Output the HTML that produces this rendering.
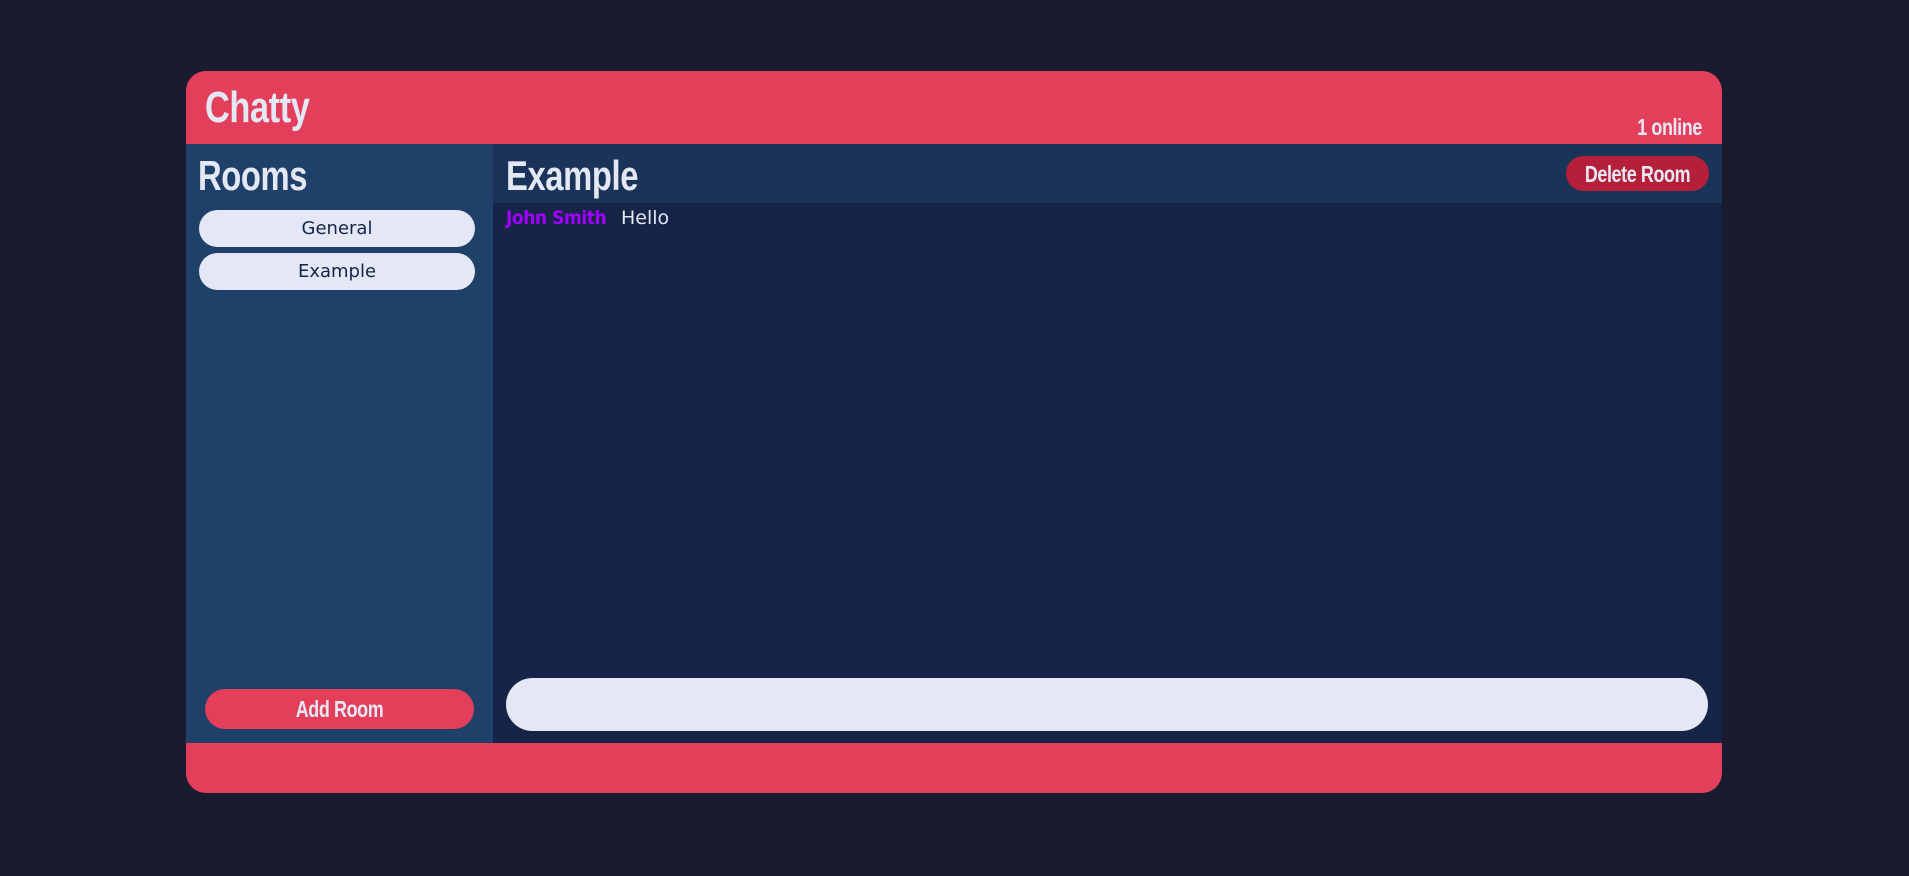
<!DOCTYPE html>
<html><head><meta charset="utf-8"><style>
*{box-sizing:border-box;margin:0;padding:0}
body{width:1909px;height:876px;background:#1b1b2f;position:relative;overflow:hidden;font-family:"DejaVu Sans","Liberation Sans",sans-serif}
.c{position:absolute;left:186px;top:71px;width:1536px;height:722px;border-radius:20px;overflow:hidden;background:#e43f5a}
.n{font-family:"Liberation Sans",sans-serif;font-weight:bold;color:#e4e8f5;position:absolute;white-space:nowrap;transform:scaleX(0.78);transform-origin:left top;letter-spacing:-0.5px}
.ctr{left:0;right:0;text-align:center;transform-origin:center top}
.side{position:absolute;left:0;top:73px;width:307px;height:599px;background:#1f4068}
.main{position:absolute;left:307px;top:73px;width:1229px;height:599px;background:#162447}
.mh{position:absolute;left:0;top:0;width:1229px;height:59px;background:#1a3459}
.pill{position:absolute;left:13px;width:276px;height:37px;border-radius:19px;background:#e4e8f5;color:#162447;font-size:18px;text-align:center;line-height:37px}
</style></head><body>
<div class="c">
<div class="n" style="left:19px;top:12px;font-size:44px">Chatty</div>
<div class="n" style="right:20px;top:43px;font-size:23px;transform-origin:right top">1 online</div>
<div class="side">
<div class="n" style="left:12px;top:8px;font-size:42px">Rooms</div>
<div class="pill" style="top:66px">General</div>
<div class="pill" style="top:109px">Example</div>
<div style="position:absolute;left:19px;top:545px;width:269px;height:40px;border-radius:20px;background:#e43f5a"><div class="n ctr" style="top:7px;font-size:23px">Add Room</div></div>
</div>
<div class="main">
<div class="mh">
<div class="n" style="left:13px;top:8px;font-size:42px">Example</div>
<div style="position:absolute;left:1073px;top:12px;width:143px;height:35px;border-radius:18px;background:#b61f3a"><div class="n ctr" style="top:5px;font-size:23px">Delete Room</div></div>
</div>
<div style="position:absolute;left:13px;top:63px;font-size:19px;white-space:nowrap"><span style="color:#a100ff;font-weight:bold;display:inline-block;transform:scaleX(0.9);transform-origin:left;letter-spacing:-0.5px">John Smith</span><span style="color:#e4e8f5;position:absolute;left:115px;top:0">Hello</span></div>
<div style="position:absolute;left:13px;top:534px;width:1202px;height:53px;border-radius:27px;background:#e4e8f5"></div>
</div>
</div>
</body></html>
